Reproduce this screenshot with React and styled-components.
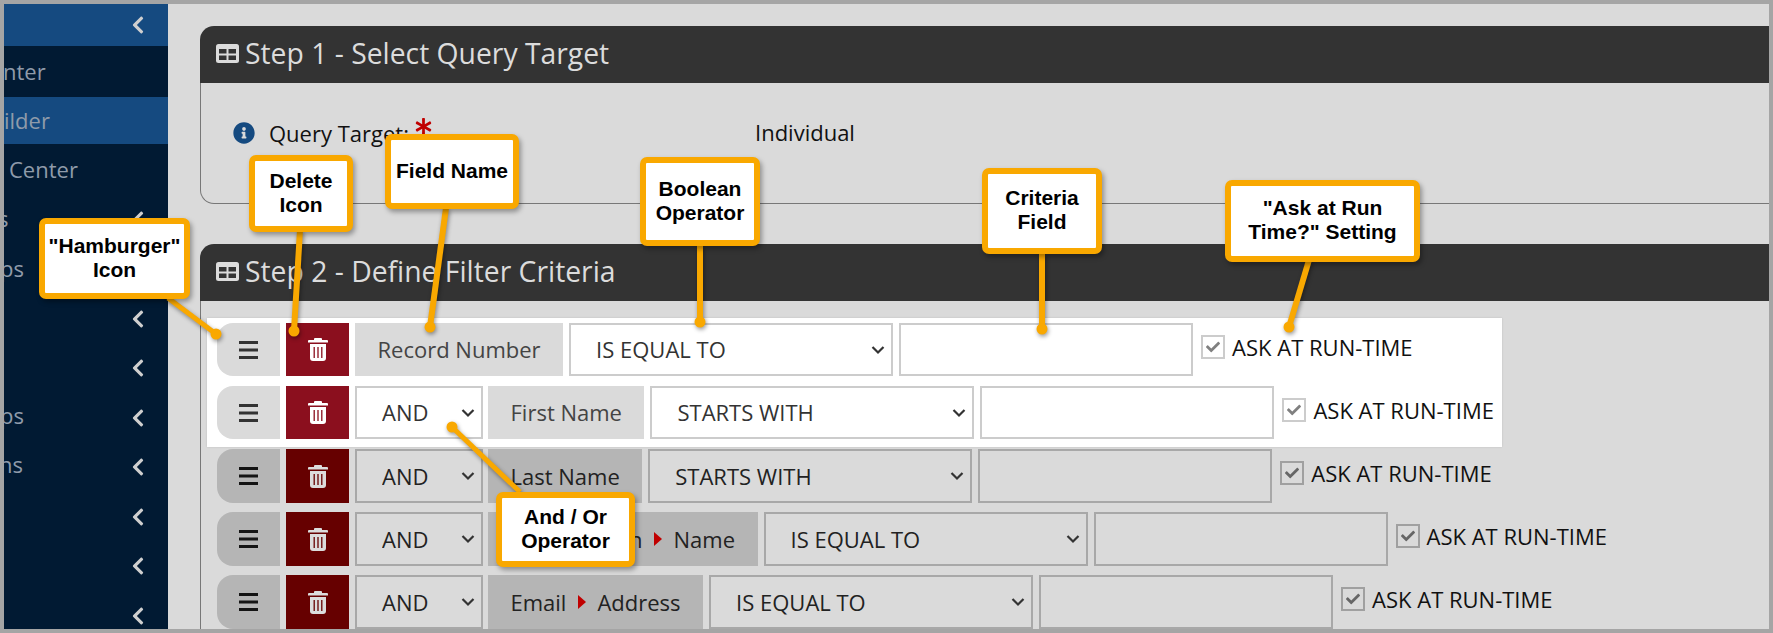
import React from 'react';
import styled, {createGlobalStyle} from 'styled-components';
import {FaAsterisk, FaCheck, FaChevronLeft, FaInfoCircle} from 'react-icons/fa';

const GlobalStyle = createGlobalStyle`
    html, body {
        margin: 0;
        padding: 0;
        overflow: hidden;
        background: #dadada;
    }

    * {
        box-sizing: border-box;
    }
`;

const Frame = styled.div`
    position: relative;
    width: 1773px;
    height: 633px;
    display: flex;
    overflow: hidden;
    border: 4px solid #a5a5a5;
    background: #dadada;
    font-family: "Open Sans", "Liberation Sans", sans-serif;
`;

const Sidebar = styled.nav`
    flex: 0 0 164px;
    display: flex;
    flex-direction: column;
    overflow: hidden;
    background: #011a33;
`;

const SideItem = styled.div`
    flex: 0 0 ${props => props.$height}px;
    display: flex;
    align-items: center;
    justify-content: space-between;
    padding-right: 20px;
    font-size: 22px;
    color: #8f9baa;
    background: ${props => (props.$active ? '#154a80' : 'transparent')};

    & svg {
        width: 20px;
        height: 20px;
        color: #cfcfcf;
    }
`;

const SideLabel = styled.span`
    margin: 0 0 ${props => props.$lift}px ${props => props.$offset}px;
    white-space: nowrap;
`;

const Main = styled.main`
    flex: 1;
    min-width: 0;
    padding: 22px 0 0 32px;
    overflow: hidden;
`;

const Panel = styled.section`
    margin-bottom: 40px;
`;

const PanelHeader = styled.header`
    height: 57px;
    display: flex;
    align-items: center;
    gap: 6px;
    padding: 0 0 3px 16px;
    background: #333333;
    color: #dcdcdc;
    font-size: 28.3px;
    border-top-left-radius: 14px;
    white-space: nowrap;
`;

const PanelBody = styled.div`
    border-left: 1px solid #777777;
    border-bottom: ${props => (props.$open ? 'none' : '1px solid #777777')};
    border-bottom-left-radius: ${props => (props.$open ? 0 : 14)}px;
    padding: ${props => props.$padding};
    height: ${props => props.$height};
`;

const TargetRow = styled.div`
    display: grid;
    grid-template-columns: 522px 1fr;
    align-items: center;
    font-size: 22px;
    color: #111111;
`;

const TargetLabel = styled.div`
    display: flex;
    align-items: center;
    gap: 14px;

    & > svg:first-child {
        width: 22px;
        height: 22px;
        color: #154a80;
    }
`;

const TargetValue = styled.div`
    margin-bottom: 2px;
`;

const Required = styled(FaAsterisk)`
    width: 17px;
    height: 17px;
    margin: -14px 0 0 -8px;
    color: #c00000;
`;

const SelectedBand = styled.div`
    display: inline-flex;
    flex-direction: column;
    gap: 10px;
    padding: 5px 8px 8px 10px;
    margin-left: 6px;
    background: #ffffff;
    box-shadow: 0 0 2px rgba(0, 0, 0, 0.12);
`;

const DimmedRows = styled.div`
    display: flex;
    flex-direction: column;
    gap: 9px;
    margin: 2px 0 0 16px;
`;

const Row = styled.div`
    display: flex;
    align-items: stretch;
    gap: 6px;
    height: ${props => (props.$dim ? 54 : 53)}px;
`;

const DragHandle = styled.div`
    flex: 0 0 63px;
    display: flex;
    align-items: center;
    justify-content: center;
    border-radius: 16px 0 0 16px;
    background: ${props => (props.$dim ? '#b5b5b5' : '#dadada')};
    color: ${props => (props.$dim ? '#141414' : '#333333')};
`;

const DeleteButton = styled.div`
    flex: 0 0 63px;
    display: flex;
    align-items: center;
    justify-content: center;
    background: ${props => (props.$dim ? '#660000' : '#8b0f1e')};
    color: ${props => (props.$dim ? '#dcdcdc' : '#ffffff')};
`;

const FieldName = styled.div`
    display: flex;
    align-items: center;
    gap: 11.5px;
    padding: 0 22.5px 1px;
    font-size: 22px;
    white-space: nowrap;
    background: ${props => (props.$dim ? '#b5b5b5' : '#dadada')};
    color: ${props => (props.$dim ? '#222222' : '#444444')};
`;

const Arrow = styled.span`
    width: 0;
    height: 0;
    border-style: solid;
    border-width: 7px 0 7px 8px;
    border-color: transparent transparent transparent #c00000;
`;

const SelectBox = styled.div`
    position: relative;
    flex: 0 0 ${props => props.$width}px;
    margin-right: ${props => (props.$tight ? -1 : 0)}px;
`;

const Select = styled.select`
    appearance: none;
    width: 100%;
    height: 100%;
    padding: 0 0 1px ${props => props.$inset}px;
    font: inherit;
    font-size: 22px;
    border-radius: 0;
    outline: none;
    border: 2px solid ${props => (props.$dim ? '#a8a8a8' : '#cccccc')};
    background: ${props => (props.$dim ? '#dadada' : '#ffffff')};
    color: ${props => (props.$dim ? '#222222' : '#333333')};
`;

const Caret = styled.svg`
    position: absolute;
    top: 50%;
    right: 8px;
    width: 14px;
    height: 9px;
    transform: translateY(-50%);
    pointer-events: none;
    color: #333333;
`;

const CriteriaInput = styled.input`
    flex: 0 0 294px;
    border-radius: 0;
    outline: none;
    border: 2px solid ${props => (props.$dim ? '#a8a8a8' : '#cccccc')};
    background: ${props => (props.$dim ? '#dadada' : '#ffffff')};
`;

const RunTime = styled.label`
    display: flex;
    align-items: center;
    gap: 7px;
    margin-left: 2px;
    font-size: 22px;
    color: #111111;
    white-space: nowrap;
    padding-bottom: 6px;
`;

const CheckBox = styled.span`
    width: 24px;
    height: 24px;
    display: flex;
    align-items: center;
    justify-content: center;
    border: 2px solid ${props => (props.$dim ? '#a0a0a0' : '#cccccc')};
    background: ${props => (props.$dim ? '#dadada' : '#ffffff')};
    color: ${props => (props.$dim ? '#666666' : '#808080')};

    & svg {
        width: 14px;
        height: 14px;
    }
`;

const Leaders = styled.svg`
    position: absolute;
    top: -4px;
    left: -4px;
    width: 1773px;
    height: 633px;
    pointer-events: none;
    filter: drop-shadow(1px 2px 2px rgba(0, 0, 0, 0.4));
`;

const Callout = styled.div`
    position: absolute;
    left: ${props => props.$x - 4}px;
    top: ${props => props.$y - 4}px;
    width: ${props => props.$w}px;
    height: ${props => props.$h}px;
    display: flex;
    align-items: center;
    justify-content: center;
    text-align: center;
    padding-bottom: 2px;
    border: 6px solid #f9a800;
    border-radius: 7px;
    background: #ffffff;
    box-shadow: 2px 3px 5px rgba(0, 0, 0, 0.35);
    color: #000000;
    font-family: "Liberation Sans", Arial, sans-serif;
    font-weight: 700;
    font-size: 21px;
    line-height: 24px;
    white-space: nowrap;
`;

const TableIcon = () => (
    <svg width="23" height="19" viewBox="0 0 23 19">
        <rect width="23" height="19" rx="2.5" fill="currentColor"/>
        <rect x="3" y="5" width="7.5" height="4.5" fill="#333333"/>
        <rect x="12.5" y="5" width="7.5" height="4.5" fill="#333333"/>
        <rect x="3" y="11.5" width="7.5" height="4.5" fill="#333333"/>
        <rect x="12.5" y="11.5" width="7.5" height="4.5" fill="#333333"/>
    </svg>
);

const HamburgerIcon = () => (
    <svg width="19" height="18" viewBox="0 0 19 18">
        <rect y="0" width="19" height="3" fill="currentColor"/>
        <rect y="7.5" width="19" height="3" fill="currentColor"/>
        <rect y="15" width="19" height="3" fill="currentColor"/>
    </svg>
);

const TrashIcon = ({bars}) => (
    <svg width="20" height="23" viewBox="0 0 20 23">
        <path d="M7 0h6a1 1 0 0 1 1 1v1h5a1 1 0 0 1 1 1v1.5H0V3a1 1 0 0 1 1-1h5V1a1 1 0 0 1 1-1z" fill="currentColor"/>
        <path d="M2 6h16v14a3 3 0 0 1-3 3H5a3 3 0 0 1-3-3z" fill="currentColor"/>
        <path d="M6.2 9v11M10 9v11M13.8 9v11" stroke={bars} strokeWidth="1.3"/>
    </svg>
);

const ChevronDown = () => (
    <Caret viewBox="0 0 14 9">
        <path d="M1.5 1.5 7 7l5.5-5.5" fill="none" stroke="currentColor" strokeWidth="2.2"/>
    </Caret>
);

const sideItems = [
    {height: 51, label: 'nter', offset: -1, lift: 1},
    {height: 47, label: 'ilder', offset: 0, lift: 1, active: true},
    {height: 51, label: 'Center', offset: 5, lift: 1},
    {height: 49.5, label: 's', offset: -6, lift: 3, chevron: true},
    {height: 49.5, label: 'ps', offset: -4, lift: 3, chevron: true},
    {height: 49.5, chevron: true},
    {height: 49.5, chevron: true},
    {height: 49.5, label: 'ps', offset: -4, lift: 6, chevron: true},
    {height: 49.5, label: 'ns', offset: -5, lift: 6, chevron: true},
    {height: 49.5, chevron: true},
    {height: 49.5, chevron: true},
    {height: 49.5, chevron: true},
];

const rows = [
    {path: ['Record Number'], operator: 'IS EQUAL TO'},
    {join: true, path: ['First Name'], operator: 'STARTS WITH'},
];

const dimmedRows = [
    {join: true, path: ['Last Name'], operator: 'STARTS WITH'},
    {join: true, path: ['Organization', 'Name'], operator: 'IS EQUAL TO'},
    {join: true, path: ['Email', 'Address'], operator: 'IS EQUAL TO'},
];

const callouts = [
    {x: 39, y: 218, w: 151, h: 81, lines: ['"Hamburger"', 'Icon']},
    {x: 249, y: 155, w: 104, h: 77, lines: ['Delete', 'Icon']},
    {x: 385, y: 134, w: 134, h: 75, lines: ['Field Name']},
    {x: 640, y: 157, w: 120, h: 89, lines: ['Boolean', 'Operator']},
    {x: 982, y: 168, w: 120, h: 86, lines: ['Criteria', 'Field']},
    {x: 1225, y: 180, w: 195, h: 82, lines: ['"Ask at Run', 'Time?" Setting']},
    {x: 496, y: 492, w: 139, h: 75, lines: ['And / Or', 'Operator']},
];

// start of each leader at its callout, end at the dot
const leaders = [
    {x1: 168, y1: 298, x2: 216, y2: 334, thin: true},
    {x1: 300, y1: 230, x2: 294, y2: 331},
    {x1: 446, y1: 208, x2: 430, y2: 327},
    {x1: 700, y1: 245, x2: 700, y2: 322},
    {x1: 1042, y1: 253, x2: 1042, y2: 329},
    {x1: 1309, y1: 260, x2: 1289, y2: 327},
    {x1: 520, y1: 492, x2: 452, y2: 427, thin: true},
];

const FilterRow = ({join, path, operator, dim}) => (
    <Row $dim={dim}>
        <DragHandle $dim={dim}><HamburgerIcon/></DragHandle>
        <DeleteButton $dim={dim}><TrashIcon bars={dim ? '#660000' : '#8b0f1e'}/></DeleteButton>
        {join && (
            <SelectBox $width={128} $tight>
                <Select $dim={dim} $inset={25} defaultValue="AND">
                    <option>AND</option>
                    <option>OR</option>
                </Select>
                <ChevronDown/>
            </SelectBox>
        )}
        <FieldName $dim={dim}>
            {path.map((part, i) => (
                <React.Fragment key={part}>
                    {i > 0 && <Arrow/>}
                    <span>{part}</span>
                </React.Fragment>
            ))}
        </FieldName>
        <SelectBox $width={324}>
            <Select $dim={dim} $inset={25} defaultValue={operator}>
                <option>IS EQUAL TO</option>
                <option>STARTS WITH</option>
            </Select>
            <ChevronDown/>
        </SelectBox>
        <CriteriaInput $dim={dim}/>
        <RunTime>
            <CheckBox $dim={dim}><FaCheck/></CheckBox>
            ASK AT RUN-TIME
        </RunTime>
    </Row>
);

const App = () => (
    <>
        <GlobalStyle/>
        <Frame>
            <Sidebar>
                <SideItem $height={42} $active>
                    <span/>
                    <FaChevronLeft/>
                </SideItem>
                {sideItems.map((item, i) => (
                    <SideItem key={i} $height={item.height} $active={item.active}>
                        <SideLabel $offset={item.offset || 0} $lift={item.lift || 0}>{item.label}</SideLabel>
                        {item.chevron && <FaChevronLeft/>}
                    </SideItem>
                ))}
            </Sidebar>
            <Main>
                <Panel>
                    <PanelHeader><TableIcon/>Step 1 - Select Query Target</PanelHeader>
                    <PanelBody $height="121px" $padding="34px 0 0 32px">
                        <TargetRow>
                            <TargetLabel>
                                <FaInfoCircle/>
                                Query Target:
                                <Required/>
                            </TargetLabel>
                            <TargetValue>Individual</TargetValue>
                        </TargetRow>
                    </PanelBody>
                </Panel>
                <Panel>
                    <PanelHeader><TableIcon/>Step 2 - Define Filter Criteria</PanelHeader>
                    <PanelBody $open $padding="17px 0 0 0" $height="auto">
                        <SelectedBand>
                            {rows.map(row => <FilterRow key={row.path[0]} {...row}/>)}
                        </SelectedBand>
                        <DimmedRows>
                            {dimmedRows.map(row => <FilterRow key={row.path[0]} dim {...row}/>)}
                        </DimmedRows>
                    </PanelBody>
                </Panel>
            </Main>
            <Leaders viewBox="0 0 1773 633">
                {leaders.map((l, i) => (
                    <g key={i} fill="#f9a800" stroke="#f9a800">
                        <line x1={l.x1} y1={l.y1} x2={l.x2} y2={l.y2} strokeWidth={l.thin ? 5 : 6}/>
                        <circle cx={l.x2} cy={l.y2} r="5.5" strokeWidth="0"/>
                    </g>
                ))}
            </Leaders>
            {callouts.map(c => (
                <Callout key={c.lines[0]} $x={c.x} $y={c.y} $w={c.w} $h={c.h}>
                    <div>
                        {c.lines.map(line => <div key={line}>{line}</div>)}
                    </div>
                </Callout>
            ))}
        </Frame>
    </>
);

export default App;
